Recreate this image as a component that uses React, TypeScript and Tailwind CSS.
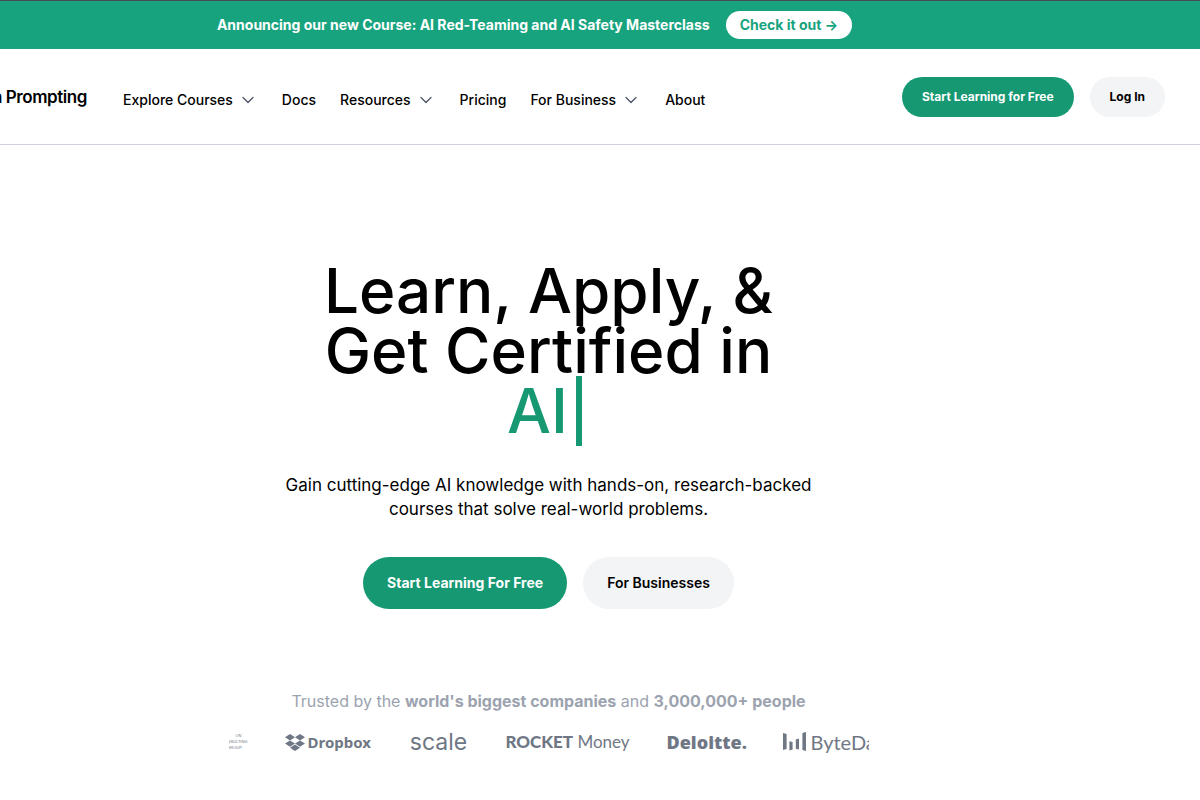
import { ChevronDown } from "lucide-react";

const navItems = [
  { label: "Explore Courses", menu: true },
  { label: "Docs", menu: false },
  { label: "Resources", menu: true },
  { label: "Pricing", menu: false },
  { label: "For Business", menu: true },
  { label: "About", menu: false },
];

function Banner() {
  return (
    <div className="flex h-[49px] items-center justify-center gap-4 border-t border-[#4b4b55] bg-[#18a37f] pr-[131px] text-sm font-bold whitespace-nowrap text-white">
      <span>Announcing our new Course: AI Red-Teaming and AI Safety Masterclass</span>
      <a href="#masterclass" className="flex h-7 items-center rounded-full bg-white px-3.5 text-[#18a37f]">
        Check it out →
      </a>
    </div>
  );
}

function Header() {
  return (
    <header className="flex h-24 items-center border-b border-[#d1d1db] pr-[35px] whitespace-nowrap">
      <a href="#home" className="flex w-[87px] shrink-0 justify-end overflow-hidden pt-0.5 text-[17px] font-semibold tracking-tight">
        Learn Prompting
      </a>
      <nav className="flex items-center gap-6 pt-1.5 pl-9 text-sm font-medium">
        {navItems.map((item) =>
          item.menu ? (
            <button key={item.label} type="button" className="flex items-center gap-[5px]">
              {item.label}
              <ChevronDown className="size-5 text-[#4b5565]" strokeWidth={1.5} />
            </button>
          ) : (
            <a key={item.label} href="#section">
              {item.label}
            </a>
          ),
        )}
      </nav>
      <div className="ml-auto flex gap-4 text-xs font-bold">
        <button type="button" className="h-10 rounded-full bg-[#169873] px-5 text-white">
          Start Learning for Free
        </button>
        <button type="button" className="h-10 rounded-full bg-[#f3f4f6] px-5">
          Log In
        </button>
      </div>
    </header>
  );
}

function DropboxMark() {
  return (
    <svg viewBox="0 0 20 17" className="h-[17px] w-5 shrink-0" fill="currentColor" aria-hidden="true">
      <path d="M5 0 10 3.2 5 6.4 0 3.2ZM15 0l5 3.2-5 3.2-5-3.2ZM5 6.4l5 3.2-5 3.2L0 9.6ZM15 6.4l5 3.2-5 3.2-5-3.2ZM5 13.8l5-3.2 5 3.2L10 17Z" />
    </svg>
  );
}

function ByteDanceMark() {
  return (
    <svg viewBox="0 0 24 20" className="h-5 w-6 shrink-0" fill="currentColor" aria-hidden="true">
      <path d="M0 1l3.6 1v15L0 18ZM6.4 9.2l3.2.9v7.4l-3.2.9ZM16 6.6v11l-3.2-.9V7.5ZM19.4 1 23 0v19l-3.6-1Z" />
    </svg>
  );
}

function Logos() {
  return (
    <div className="flex h-10 w-full max-w-[640px] items-center overflow-hidden whitespace-nowrap text-[#6f7785]">
      <div className="flex w-5 shrink-0 justify-end overflow-hidden">
        <div className="w-7 shrink-0 font-['Liberation_Sans',sans-serif] text-[4px] leading-[6px]">
          <div className="pl-2">ON</div>
          <div>CONSULTING</div>
          <div>GROUP</div>
        </div>
      </div>
      <div className="ml-9 flex w-[88px] shrink-0 items-center gap-[3px] font-['Noto_Sans',sans-serif] text-[15px] font-bold">
        <DropboxMark />
        Dropbox
      </div>
      <div className="ml-9 w-[60px] shrink-0 font-['Inter',sans-serif] text-[23px] leading-6">scale</div>
      <div className="ml-9 w-[126px] shrink-0 font-['Lato',sans-serif] text-[17px]">
        <span className="font-black">ROCKET</span> Money
      </div>
      <div className="ml-9 w-20 shrink-0 font-['Open_Sans',sans-serif] text-lg font-extrabold">Deloitte.</div>
      <div className="ml-9 flex shrink-0 items-center gap-1 font-['Lato',sans-serif] text-xl">
        <ByteDanceMark />
        ByteDance
      </div>
    </div>
  );
}

export default function App() {
  return (
    <div className="overflow-x-hidden bg-white font-['Inter',sans-serif] text-black">
      <Banner />
      <Header />
      <main className="flex flex-col items-center pt-[116px] pr-[103px] text-center">
        <h1 className="text-[62px] leading-[60px] font-medium whitespace-nowrap">
          Learn, Apply, &amp;
          <br />
          Get Certified in
          <br />
          <span className="flex items-center justify-center gap-2 pr-2 text-[#169873]">
            AI
            <span className="-my-2 h-[70px] w-1.5 bg-[#169873]" />
          </span>
        </h1>
        <p className="mt-8 text-[17px] leading-6 whitespace-nowrap">
          Gain cutting-edge AI knowledge with hands-on, research-backed
          <br />
          courses that solve real-world problems.
        </p>
        <div className="mt-9 flex gap-4 text-sm font-semibold">
          <button type="button" className="h-[52px] rounded-full bg-[#169873] px-6 font-bold text-white">
            Start Learning For Free
          </button>
          <button type="button" className="h-[52px] rounded-full bg-[#f3f4f6] px-6">
            For Businesses
          </button>
        </div>
        <p className="mt-20 text-base leading-6 whitespace-nowrap text-[#9ca3af]">
          Trusted by the <b>world&#39;s biggest companies</b> and <b>3,000,000+ people</b>
        </p>
        <div className="mt-[9px] flex w-full justify-center">
          <Logos />
        </div>
      </main>
    </div>
  );
}
